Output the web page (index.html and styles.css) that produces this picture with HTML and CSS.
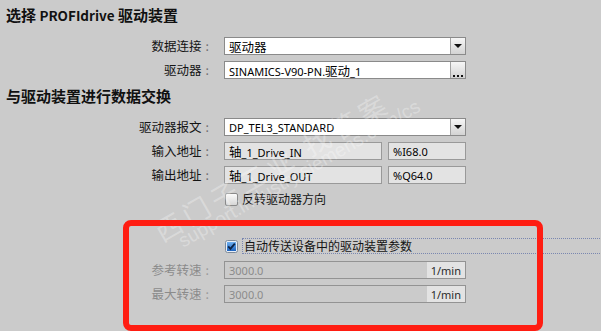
FILE: index.html
```html
<!DOCTYPE html>
<html lang="zh">
  <head>
    <meta charset="utf-8">
    <title>PROFIdrive 驱动装置</title>
    <link rel="stylesheet" href="styles.css">
  </head>
  <body>
    <div class="page">
      <h2 class="heading">选择 <span class="latin">PROFIdrive</span> 驱动装置</h2>

      <div class="row first">
        <label class="label">数据连接<span class="colon">:</span></label>
        <div class="field">
          <span class="value"><span class="cjk">驱动器</span></span>
          <span class="btn drop"><span class="tri"></span></span>
        </div>
      </div>
      <div class="row">
        <label class="label">驱动器<span class="colon">:</span></label>
        <div class="field">
          <span class="value">SINAMICS-V90-PN.<span class="cjk">驱动</span>_1</span>
          <span class="btn dots"><span></span><span></span><span></span></span>
        </div>
      </div>

      <h2 class="heading second">与驱动装置进行数据交换</h2>

      <div class="row first">
        <label class="label">驱动器报文<span class="colon">:</span></label>
        <div class="field">
          <span class="value">DP_TEL3_STANDARD</span>
          <span class="btn drop"><span class="tri"></span></span>
        </div>
      </div>
      <div class="row">
        <label class="label">输入地址<span class="colon">:</span></label>
        <div class="field readonly name"><span class="value"><span class="cjk">轴</span>_1_Drive_IN</span></div>
        <div class="field readonly addr"><span class="value">%I68.0</span></div>
      </div>
      <div class="row">
        <label class="label">输出地址<span class="colon">:</span></label>
        <div class="field readonly name"><span class="value"><span class="cjk">轴</span>_1_Drive_OUT</span></div>
        <div class="field readonly addr"><span class="value">%Q64.0</span></div>
      </div>
      <div class="row">
        <span class="label"></span>
        <span class="check"></span>
        <span class="check-text">反转驱动器方向</span>
      </div>

      <div class="row auto">
        <span class="label"></span>
        <span class="check on">
          <svg width="13" height="13" viewBox="0 0 13 13">
            <defs>
              <linearGradient id="cb" x1="0" y1="0" x2="0" y2="1">
                <stop offset="0" stop-color="#6fb0f0"/>
                <stop offset="1" stop-color="#1e64c0"/>
              </linearGradient>
            </defs>
            <rect x="0.5" y="0.5" width="12" height="12" rx="2" fill="#e8eef6" stroke="#7d8a9a"/>
            <rect x="2" y="2" width="9" height="9" fill="url(#cb)"/>
            <path d="M3.2 6.4 L5.4 8.8 L9.8 3.6" fill="none" stroke="#0b2347" stroke-width="1.8"/>
          </svg>
        </span>
        <span class="check-text focus">自动传送设备中的驱动装置参数</span>
      </div>
      <div class="row">
        <label class="label off">参考转速<span class="colon">:</span></label>
        <div class="field disabled">
          <span class="value">3000.0</span>
          <span class="unit">1/min</span>
        </div>
      </div>
      <div class="row">
        <label class="label off">最大转速<span class="colon">:</span></label>
        <div class="field disabled">
          <span class="value">3000.0</span>
          <span class="unit">1/min</span>
        </div>
      </div>

      <div class="mark">
        <div class="mark-big">西门子工业 找答案</div>
        <div class="mark-url">support.industry.siemens.com/cs</div>
      </div>
      <div class="annot"></div>
    </div>
  </body>
</html>
```

FILE: styles.css
```css
html, body {
    margin: 0;
    padding: 0;
    background: #cbcbcb;
}

body {
    font-family: "Noto Sans CJK SC", "Noto Sans", sans-serif;
    font-size: 12.5px;
    color: #141414;
    overflow: hidden;
}

.page {
    position: relative;
    width: 601px;
    height: 331px;
    overflow: hidden;
    padding-top: 5px;
    box-sizing: border-box;
}

.heading {
    margin: 0;
    padding-left: 6px;
    font-size: 15px;
    font-weight: bold;
    line-height: 20px;
    color: #111;
}
.heading .latin {
    font-size: 13.5px;
}
.heading.second {
    margin-top: 7px;
}

.row {
    display: flex;
    align-items: center;
    height: 18px;
    margin-top: 6px;
}
.row.first {
    margin-top: 12px;
}
.row.auto {
    margin-top: 29px;
}

.label {
    flex: none;
    width: 224px;
    padding-right: 15px;
    box-sizing: border-box;
    text-align: right;
    line-height: 18px;
    white-space: nowrap;
}
.label.off {
    color: #8b8b8b;
}
.colon {
    margin-left: 4px;
    color: #707070;
}
.label.off .colon {
    color: #9a9a9a;
}

.field {
    flex: none;
    display: flex;
    align-items: center;
    width: 242px;
    height: 18px;
    box-sizing: border-box;
    border: 1px solid #8a8a8a;
    background: #fff;
    font-family: "Noto Sans", "Noto Sans CJK SC", sans-serif;
    font-size: 11px;
    color: #000;
    white-space: nowrap;
}
.field .value {
    flex: 1;
    padding-left: 4px;
}
.cjk {
    font-family: "Noto Sans CJK SC", sans-serif;
    font-size: 12.5px;
}
.field.readonly {
    background: #e3e3e3;
    border-color: #999;
}
.field.name {
    width: 158px;
}
.field.addr {
    width: 78px;
    margin-left: 6px;
}
.field.disabled {
    background: #cbcbcb;
    border-color: #939393;
    color: #8b8b8b;
}
.unit {
    align-self: stretch;
    display: flex;
    align-items: center;
    justify-content: flex-end;
    width: 38px;
    background: #e3e3e3;
    color: #2a2a2a;
    padding-right: 4px;
    box-sizing: border-box;
}

.btn {
    align-self: stretch;
    width: 15px;
    border-left: 1px solid #a3a3a3;
    background: linear-gradient(#f6f6f6, #d3d3d3);
    box-sizing: border-box;
    display: flex;
    justify-content: center;
}
.btn.drop {
    align-items: center;
}
.tri {
    width: 0;
    height: 0;
    border-left: 4px solid transparent;
    border-right: 4px solid transparent;
    border-top: 4px solid #111;
}
.btn.dots {
    align-items: flex-end;
    gap: 2px;
    padding-bottom: 1px;
}
.btn.dots span {
    width: 2px;
    height: 2px;
    background: #111;
}

.check {
    flex: none;
    width: 13px;
    height: 13px;
    margin-left: 1px;
    box-sizing: border-box;
    border: 1px solid #8a8a8a;
    border-radius: 2px;
    background: linear-gradient(#fbfbfb, #d6d6d6);
}
.check.on {
    border: none;
    background: none;
}
.check svg {
    display: block;
}
.check-text {
    margin-left: 4px;
    font-size: 12px;
    line-height: 16px;
    white-space: nowrap;
}
.check-text.focus {
    flex: none;
    width: 380px;
    border: 1px dotted #7a87b0;
    box-sizing: border-box;
    height: 16px;
    line-height: 14px;
    padding-left: 1px;
}

.mark {
    position: absolute;
    left: 150px;
    top: 222px;
    transform: rotate(-30deg);
    transform-origin: left top;
    color: rgba(255, 255, 255, 0.3);
    white-space: nowrap;
    pointer-events: none;
}
.mark-big {
    font-size: 27px;
    line-height: 25px;
    letter-spacing: 5px;
}
.mark-url {
    font-family: "Liberation Sans", sans-serif;
    font-size: 19px;
    line-height: 19px;
    margin-top: -2px;
    margin-left: 16px;
}

.annot {
    position: absolute;
    left: 123px;
    top: 220px;
    width: 420px;
    height: 111px;
    box-sizing: border-box;
    border: 6px solid #ff1d12;
    border-radius: 8px;
}
```
